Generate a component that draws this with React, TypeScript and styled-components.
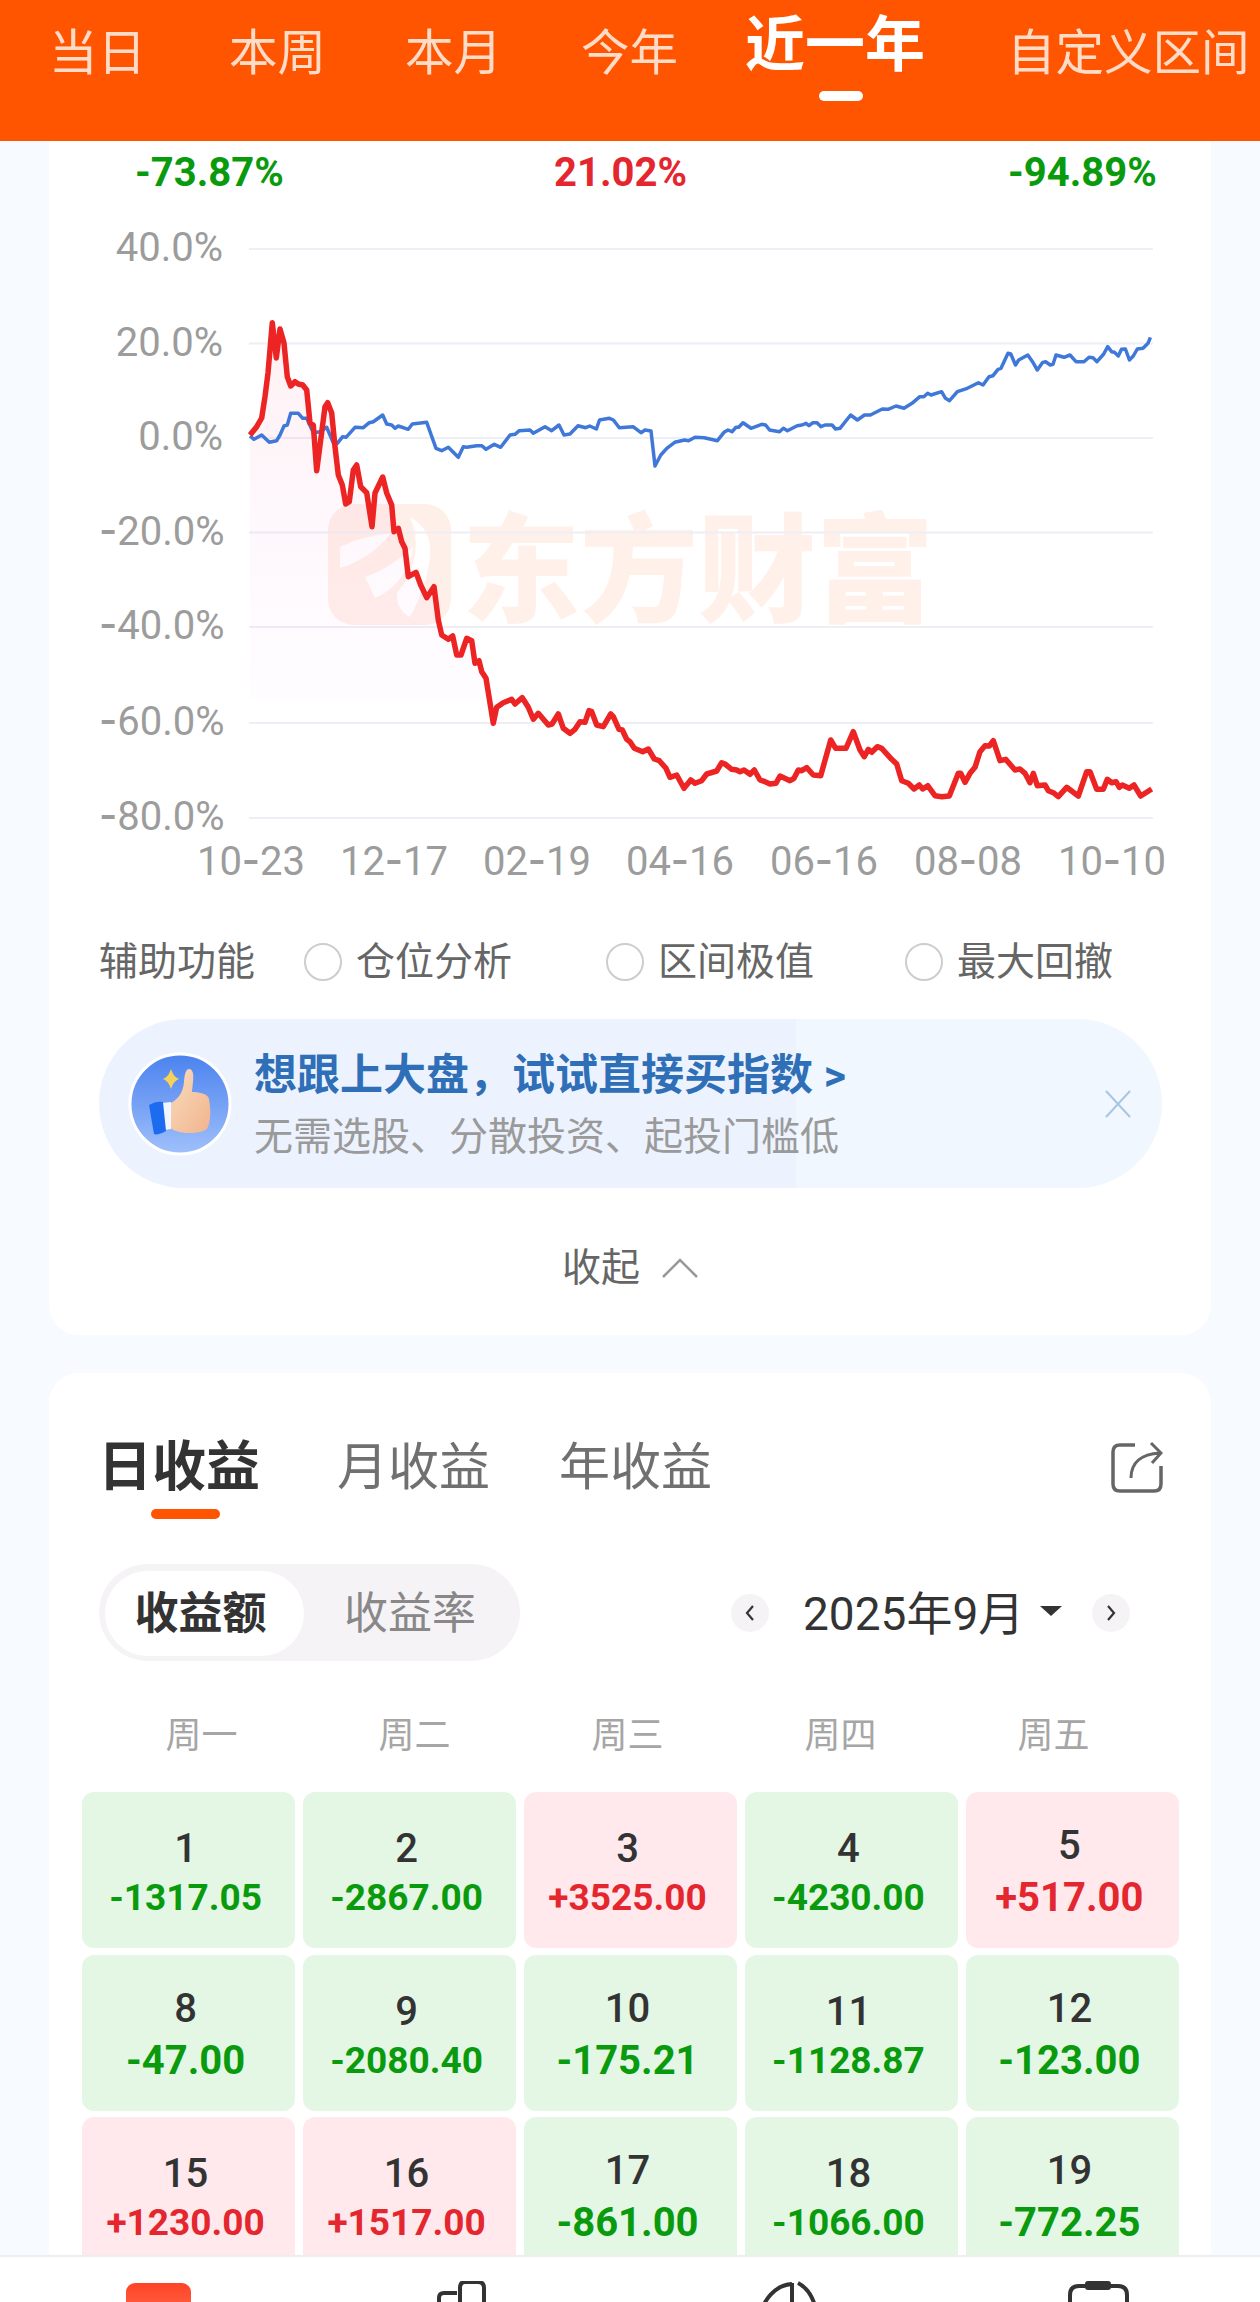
import React from 'react';
import styled, { createGlobalStyle } from 'styled-components';

const FONT = 'Roboto, "Noto Sans CJK SC", sans-serif';
const GREEN = '#0a9a0e';
const RED = '#e4262e';

const GlobalStyle = createGlobalStyle`
  html, body {
    margin: 0;
    padding: 0;
    background: #f7faff;
    overflow: hidden;
  }
  * {
    box-sizing: border-box;
  }
`;

const redLine =
  '250,435 256.7,426.7 261.7,418 265,396.7 268,373 272.3,322.7 276.3,358 280,329 284,343 287.3,376.7 290.7,386 295,381.7 298.3,384 302.7,385 306.7,390 310,423 313.3,425 316.7,470.7 320.7,440 325,406.7 327.7,402.7 331.7,413 335,446.7 338.3,475 342.3,485 345.7,504 349.3,501.7 353.3,470 356.7,465 360.7,486.7 366.7,492.7 372,526.7 375,493 382.7,477 386.7,493 391.7,505 394,531.7 398.3,528.3 401.7,541.7 405,548.3 408.3,576.7 416,572.3 420.7,585 426.7,597.7 434,586.7 438.3,620 441.7,635 448.3,639.3 452.7,636 456.7,655 461,655 466.7,638.3 471.7,640.7 475,663.3 479,660.7 481.7,671.7 486,678.3 493.3,723.3 496.7,707.3 503.3,702.7 511.7,699.3 515,704 522.3,697.7 528.3,707.3 533.3,719.3 538.3,713.3 548.3,725 552,724 558.3,714 563.3,728.3 570,733.3 575,729.3 580,721.7 585,722.3 589,710.7 591.7,711.7 596.7,725 603.3,726.7 610.7,714 613.3,716.7 619,729.3 622.3,730 626.7,739.3 630,741.7 634.3,748.3 642.7,751.7 648.3,749 654.3,759 659.3,760.7 666,768.3 670,777.3 676.7,775 684,788.3 690.7,780 695,783.3 701.7,780.7 706.7,774 716.7,771 721.7,762.7 725,764 731.7,769.3 736.7,770 740,771.7 744,770 750,774.3 754.3,770 760,780 765,781.7 770,784 776,783.3 780,776 790,780.7 794,778.3 798.3,770 801.7,770.7 806.7,767.7 813.3,775 820.7,775.7 830.7,740 835.7,748.3 846,748.3 853.3,731.7 860,750 864.3,756.7 868.3,749.3 871.7,752.3 877.3,746.7 881.7,748.3 891.7,759.3 896.7,764 901.7,780.7 908.3,783.3 914,789 919.3,785 922.7,789 927.7,785.7 935,795.7 941.7,796.7 949.3,796 958.3,773.3 960.7,773.3 965,782.3 970,773.3 975,767.3 980,751.7 985,745.7 989.3,746 993.3,740.7 1000,760.7 1005.7,759.3 1015,770 1020,769 1025,773.3 1030,782.7 1033.3,773.3 1037.3,785.7 1045,785 1048.3,790.7 1053.3,792.7 1058.3,796.7 1066.7,787.3 1078.3,796 1086.7,771.7 1090,771.7 1096.7,789.3 1103.3,789.3 1107.3,779.3 1111.7,782.7 1116,781.7 1119.3,787.3 1122.3,785 1129.3,788.3 1134,785 1140.7,796 1151.7,789';

const blueLine =
  '250,436 254,439.3 261.7,435 269.3,442.3 276.7,440.7 280,435 284,426 287.3,425 290.7,413.3 298.3,413.3 302.7,418.3 306.7,418.3 313.3,432.7 320,431.7 326.7,427.3 333.3,442.7 337.3,443.3 342.7,436.7 346,437.3 355,427.3 363.3,427.7 369.3,422.7 373.3,421.7 382.7,415 386.7,424 391.7,425 395,428.3 398.3,426 408.3,429.3 412.3,424 426.7,422.3 436,448.3 441.7,450.7 448.3,447.3 458.3,457.3 463.3,446.7 466.7,447.3 476.7,445.7 481.7,445.7 486,449.3 494.3,444.3 500.7,447.3 510,435 515,434.3 519.3,430.7 530,430 533.3,433.3 545,426.7 551.7,430.7 559,425 564,435 570,434 578,425.7 585.7,427.7 589.7,426 596.4,429 599.5,420 609.4,418.3 613.4,420 619.3,427.7 633,426.7 641,432.7 645,430 651,431 655,466 660.8,455 666.8,448.3 674.7,442.3 684.6,440 688.5,440.7 695,437.3 704.3,437.7 717.4,440.7 724,432.3 728,430 732,431.7 736,427.3 738.7,427.3 743,422.7 751,428.3 761.7,424.3 765.6,425 769.6,430 779.5,431.7 783.4,428.3 787.4,430.7 797.2,425.7 802,425 806,423.3 809,425.7 813,422.7 817,422.7 821,426.7 825,425 832,425 835.6,429 840,428.3 850.6,415 857.4,420 864.5,415 870.4,415 882.3,409 888,409.3 896,406 904,408.3 912,403.3 919.8,396.7 923.8,396.7 927.7,393.3 931,395 941.6,391.7 945.5,398.3 949.5,400.7 957.4,391.7 967.3,388.3 978.4,382.7 983,385 989,376.7 993,375.7 998,369.3 1001,368.3 1008,353.3 1010.8,354 1015.5,365 1018.7,360 1027.8,355 1032.5,361.7 1037.3,370 1042.4,362.7 1045.6,361.7 1050.3,365 1053,364.3 1056,355 1064,357.3 1070,355 1076,361.7 1084,361.7 1089,357.3 1093,357.7 1097,361.7 1103.7,354 1107.7,346.7 1111.6,351.7 1114.4,352.3 1118.3,356 1121.5,349.3 1125.4,349 1129.4,360 1133.3,356 1137.3,349 1143,348.3 1148,343.3 1150.4,337.3';

const areaPoints =
  redLine.slice(0, redLine.indexOf(' 493.3,723.3')) + ' 489,700 250,700';

const gridYs = [249, 343.5, 438, 532.5, 627, 723, 818];
const yLabels = ['40.0%', '20.0%', '0.0%', '-20.0%', '-40.0%', '-60.0%', '-80.0%'];
const xLabels = [
  ['10-23', 251],
  ['12-17', 394],
  ['02-19', 537],
  ['04-16', 680],
  ['06-16', 824],
  ['08-08', 968],
  ['10-10', 1112],
] as const;

const periods = [
  { label: '当日', gap: 0 },
  { label: '本周', gap: 83 },
  { label: '本月', gap: 79 },
  { label: '今年', gap: 79 },
  { label: '近一年', gap: 67, active: true },
  { label: '自定义区间', gap: 82 },
];

const days = [
  ['1', '-1317.05'], ['2', '-2867.00'], ['3', '+3525.00'], ['4', '-4230.00'], ['5', '+517.00'],
  ['8', '-47.00'], ['9', '-2080.40'], ['10', '-175.21'], ['11', '-1128.87'], ['12', '-123.00'],
  ['15', '+1230.00'], ['16', '+1517.00'], ['17', '-861.00'], ['18', '-1066.00'], ['19', '-772.25'],
];

const Page = styled.div`
  width: 1260px;
  height: 2302px;
  display: flex;
  flex-direction: column;
  overflow: hidden;
  background: #f7faff;
  font-family: ${FONT};
`;

const Header = styled.header`
  flex: 0 0 141px;
  background: #ff5500;
  display: flex;
  align-items: flex-start;
  padding: 17px 0 0 49px;
  white-space: nowrap;
`;

const Period = styled.div<{ $gap: number; $active?: boolean }>`
  margin-left: ${(p) => p.$gap}px;
  display: flex;
  flex-direction: column;
  align-items: center;
  padding-top: ${(p) => (p.$active ? 0 : 14)}px;
  color: ${(p) => (p.$active ? '#fff' : '#ffdcc8')};
  font-size: ${(p) => (p.$active ? 60 : 48.5)}px;
  font-weight: ${(p) => (p.$active ? 700 : 400)};
  line-height: ${(p) => (p.$active ? 58 : 46)}px;
`;

const PeriodMark = styled.i`
  width: 44px;
  height: 10px;
  margin: 16px 0 0 12px;
  border-radius: 5px;
  background: #fff;
`;

const Scroll = styled.main`
  flex: 1;
  min-height: 0;
  overflow: hidden;
`;

const Card = styled.section<{ $flat?: boolean }>`
  width: 1162px;
  margin: ${(p) => (p.$flat ? 0 : 38)}px auto 0 49px;
  background: #fff;
  border-radius: ${(p) => (p.$flat ? '0 0 30px 30px' : '30px 30px 0 0')};
`;

const Returns = styled.div`
  height: 59px;
  padding: 4px 0 0 86px;
  display: grid;
  grid-template-columns: 419px 454px auto;
  align-items: center;
`;

const ReturnValue = styled.span<{ $up?: boolean }>`
  color: ${(p) => (p.$up ? RED : GREEN)};
  font-size: 40px;
  font-weight: 700;
  line-height: 44px;
`;

const ChartSvg = styled.svg`
  display: block;
  width: 1162px;
  height: 700px;
`;

const AxisText = styled.text`
  fill: #9c9c9c;
  font-family: ${FONT};
  font-size: 40px;
`;

const AxisDash = styled.tspan`
  font-size: 54px;
`;

const Watermark = styled.text`
  fill: #fff0ea;
  font-family: ${FONT};
  font-size: 118px;
  font-weight: 900;
`;

const Assist = styled.div`
  margin-top: 42px;
  height: 40px;
  padding-left: 50px;
  display: grid;
  grid-template-columns: 205px 302px 299px auto;
  align-items: center;
  color: #666;
  font-size: 39px;
  line-height: 40px;
`;

const Option = styled.label`
  display: flex;
  align-items: center;
  gap: 14px;
  color: #666;
`;

const Radio = styled.span`
  width: 38px;
  height: 38px;
  border-radius: 50%;
  border: 2.5px solid #cdcdcd;
  background: #fff;
`;

const Banner = styled.div`
  margin: 37px 49px 0 50px;
  height: 169px;
  border-radius: 85px;
  padding: 0 30px 0 29px;
  display: flex;
  align-items: center;
  gap: 22px;
  background: linear-gradient(90deg, #edf3fe 0, #edf3fe 65.6%, #f0f7fe 65.6%, #f0f7fe 100%);
`;

const BannerText = styled.div`
  flex: 1;
  display: flex;
  flex-direction: column;
  padding-top: 2px;
  white-space: nowrap;
`;

const BannerTitle = styled.div`
  color: #2f6fb8;
  font-size: 43px;
  font-weight: 700;
  line-height: 56px;
`;

const BannerSub = styled.div`
  color: #9a9a9a;
  font-size: 39px;
  line-height: 50px;
  margin-top: 9px;
`;

const Collapse = styled.div`
  margin-top: 55px;
  padding-bottom: 42px;
  height: 92px;
  display: flex;
  justify-content: center;
  align-items: center;
  gap: 22px;
  color: #666;
  font-size: 39px;
  line-height: 50px;
`;

const TabRow = styled.div`
  padding: 65px 48px 0 49px;
  display: flex;
  align-items: flex-start;
`;

const Tab = styled.div<{ $gap?: number; $active?: boolean }>`
  margin-left: ${(p) => p.$gap ?? 0}px;
  display: flex;
  flex-direction: column;
  align-items: center;
  color: ${(p) => (p.$active ? '#333' : '#707070')};
  font-size: ${(p) => (p.$active ? 54 : 51)}px;
  font-weight: ${(p) => (p.$active ? 700 : 400)};
  line-height: 60px;
`;

const TabMark = styled.i`
  width: 69px;
  height: 10px;
  margin: 11px 0 0 12px;
  border-radius: 5px;
  background: #ff5500;
`;

const ShareButton = styled.svg`
  margin: 3px 0 0 auto;
  width: 52px;
  height: 52px;
`;

const Controls = styled.div`
  margin-top: 45px;
  padding-left: 50px;
  display: flex;
  align-items: center;
`;

const Toggle = styled.div`
  width: 421px;
  height: 97px;
  padding: 7px 4px 5px 6px;
  border-radius: 49px;
  background: #f6f3f7;
  display: flex;
  font-size: 44px;
  line-height: 87px;
`;

const ToggleOn = styled.div`
  width: 199px;
  padding-right: 8px;
  border-radius: 43px;
  background: #fff;
  color: #333;
  font-weight: 700;
  text-align: center;
`;

const ToggleOff = styled.div`
  flex: 1;
  color: #888;
  text-align: center;
`;

const MonthPicker = styled.div`
  margin-left: 211px;
  display: flex;
  align-items: center;
  color: #333;
  font-size: 46px;
  line-height: 50px;
`;

const StepButton = styled.span`
  width: 38px;
  height: 38px;
  border-radius: 50%;
  background: #f6f3f7;
  display: flex;
  align-items: center;
  justify-content: center;
`;

const MonthLabel = styled.span`
  margin: 3px 16px 0 34px;
`;

const Caret = styled.i`
  width: 0;
  height: 0;
  margin: 0 30px 4px 0;
  border-left: 11px solid transparent;
  border-right: 11px solid transparent;
  border-top: 10px solid #333;
`;

const Weekdays = styled.div`
  margin-top: 55px;
  padding-left: 46px;
  display: grid;
  grid-template-columns: repeat(5, 213px);
  color: #a6a6a6;
  font-size: 36px;
  line-height: 40px;
  text-align: center;
`;

const Calendar = styled.div`
  margin: 36px 32px 0 33px;
  display: grid;
  grid-template-columns: repeat(5, 1fr);
  grid-auto-rows: 156px;
  gap: 6.5px 7.75px;
`;

const Day = styled.div<{ $up: boolean }>`
  border-radius: 12px;
  padding: 8px 6px 0 0;
  background: ${(p) => (p.$up ? '#ffe9ed' : '#e4f7e5')};
  display: flex;
  flex-direction: column;
  align-items: center;
  justify-content: center;
`;

const DayNumber = styled.div`
  color: #333;
  font-size: 40px;
  font-weight: 500;
  line-height: 48px;
`;

const DayValue = styled.div<{ $up: boolean; $big: boolean }>`
  color: ${(p) => (p.$up ? RED : GREEN)};
  font-size: ${(p) => (p.$big ? 40 : 37)}px;
  font-weight: 700;
  line-height: ${(p) => (p.$big ? 56 : 50)}px;
`;

const Nav = styled.nav`
  flex: 0 0 47px;
  overflow: hidden;
  background: #fff;
  border-top: 2px solid #eeeeee;
  display: grid;
  grid-template-columns: repeat(4, 1fr);
  padding-top: 24px;
`;

const NavIcon = styled.svg`
  display: block;
  width: 80px;
  height: 40px;
  margin: 0 auto;
`;

function ThumbBadge() {
  return (
    <svg width="104" height="104" viewBox="0 0 104 104" style={{ flex: 'none' }}>
      <defs>
        <linearGradient id="badgeBg" x1="0" y1="0" x2="0" y2="1">
          <stop offset="0" stopColor="#4a82ee" />
          <stop offset="1" stopColor="#a0c0fb" />
        </linearGradient>
        <linearGradient id="hand" x1="0" y1="0" x2="1" y2="1">
          <stop offset="0" stopColor="#fbdcbd" />
          <stop offset="1" stopColor="#f0b48e" />
        </linearGradient>
      </defs>
      <circle cx="52" cy="52" r="50" fill="url(#badgeBg)" stroke="#fff" strokeWidth="3" />
      <path d="M43 17 C45 23 47 25 51 27 C47 29 45 31 43 37 C41 31 39 29 35 27 C39 25 41 23 43 17Z" fill="#f7d25a" />
      <path
        d="M43 51 C50 47 55 41 56 30 C56.5 22 58 17 61 17 C65 17 66 23 65 30 C64.500 35 64 38 64 40 C72 40 80 42 81 47 C83 58 83 70 79 77 C74 81 60 82 52 80 C48 79 45 78 42 76Z"
        fill="url(#hand)"
      />
      <path d="M34 51 L43 50 L43 77 L36 78Z" fill="#f2f6ff" />
      <path d="M21 53 C26 50 31 49 35 50 L38 79 C33 82 28 83 26 82Z" fill="#1d6cf0" />
    </svg>
  );
}

// the dash on the axis is longer than the font's hyphen
function axisLabel(text: string) {
  const [before, after] = text.split('-');
  if (after === undefined) return text;
  return (
    <>
      {before && <tspan>{before}</tspan>}
      <AxisDash dx="1.5" dy="3">-</AxisDash>
      <tspan dx="1.5" dy="-3">{after}</tspan>
    </>
  );
}

function ReturnChart() {
  return (
    <ChartSvg viewBox="49 200 1162 700">
      <defs>
        <linearGradient id="areaFill" x1="0" y1="0" x2="0" y2="1">
          <stop offset="0" stopColor="#ff3050" stopOpacity="0.07" />
          <stop offset="1" stopColor="#e060ff" stopOpacity="0.015" />
        </linearGradient>
      </defs>

      {/* watermark */}
      <rect x="328" y="504" width="123" height="121" rx="26" fill="#ffefe9" />
      <path d="M340 547 C358 538 375 535 391 533 C378 550 360 562 340 568Z" fill="#fff" />
      <path d="M365 577 C382 572 398 560 413 547 C410 570 395 590 375 598Z" fill="#fff" />
      <path d="M410 517 C425 525 431 538 430 553 C430 572 420 600 410 617 C400 612 396 602 397 593 C410 578 424 550 410 517Z" fill="#fff" />
      <Watermark x="462" y="613">东方财富</Watermark>

      {gridYs.map((y) => (
        <line key={y} x1="249" x2="1153" y1={y} y2={y} stroke="#eeeef5" strokeWidth="2" />
      ))}
      {yLabels.map((t, i) => (
        <AxisText key={t} x="223" y={gridYs[i] + 12} textAnchor="end">
          {axisLabel(t)}
        </AxisText>
      ))}
      {xLabels.map(([t, x]) => (
        <AxisText key={t} x={x} y="875" textAnchor="middle">
          {axisLabel(t)}
        </AxisText>
      ))}

      <polygon points={areaPoints} fill="url(#areaFill)" />
      <polyline points={blueLine} fill="none" stroke="#3f78d8" strokeWidth="3.500" strokeLinejoin="round" />
      <polyline points={redLine} fill="none" stroke="#ec2424" strokeWidth="5.500" strokeLinejoin="round" />
    </ChartSvg>
  );
}

export default function App() {
  return (
    <Page>
      <GlobalStyle />
      <Header>
        {periods.map((p) => (
          <Period key={p.label} $gap={p.gap} $active={p.active}>
            {p.label}
            {p.active && <PeriodMark />}
          </Period>
        ))}
      </Header>

      <Scroll>
        <Card $flat>
          <Returns>
            <ReturnValue>-73.87%</ReturnValue>
            <ReturnValue $up>21.02%</ReturnValue>
            <ReturnValue>-94.89%</ReturnValue>
          </Returns>
          <ReturnChart />
          <Assist>
            <span>辅助功能</span>
            {['仓位分析', '区间极值', '最大回撤'].map((t) => (
              <Option key={t}>
                <Radio />
                {t}
              </Option>
            ))}
          </Assist>
          <Banner>
            <ThumbBadge />
            <BannerText>
              <BannerTitle>想跟上大盘，试试直接买指数 &gt;</BannerTitle>
              <BannerSub>无需选股、分散投资、起投门槛低</BannerSub>
            </BannerText>
            <svg width="28" height="28" viewBox="0 0 28 28">
              <path d="M2 1 L26 27 M26 1 L2 27" stroke="#a9c5e6" strokeWidth="2" fill="none" />
            </svg>
          </Banner>
          <Collapse>
            收起
            <svg width="36" height="20" viewBox="0 0 36 20">
              <path d="M1 19 L18 2 L35 19" stroke="#999" strokeWidth="2.500" fill="none" />
            </svg>
          </Collapse>
        </Card>

        <Card>
          <TabRow>
            <Tab $active>
              日收益
              <TabMark />
            </Tab>
            <Tab $gap={77}>月收益</Tab>
            <Tab $gap={69}>年收益</Tab>
            <ShareButton viewBox="0 0 52 52">
              <path
                d="M24 4 H9 C4.500 4 2 6.500 2 11 V43 C2 47.500 4.500 50 9 50 H43 C47.500 50 50 47.500 50 43 V25"
                fill="none"
                stroke="#666"
                strokeWidth="3.500"
              />
              <path d="M20 37 C20 22 30 13 49 12 M40 2 L50 12 L41 22" fill="none" stroke="#666" strokeWidth="3" />
            </ShareButton>
          </TabRow>

          <Controls>
            <Toggle>
              <ToggleOn>收益额</ToggleOn>
              <ToggleOff>收益率</ToggleOff>
            </Toggle>
            <MonthPicker>
              <StepButton>
                <svg width="10" height="16" viewBox="0 0 10 16">
                  <path d="M8 1 L2 8 L8 15" fill="none" stroke="#333" strokeWidth="2.200" />
                </svg>
              </StepButton>
              <MonthLabel>2025年9月</MonthLabel>
              <Caret />
              <StepButton>
                <svg width="10" height="16" viewBox="0 0 10 16">
                  <path d="M2 1 L8 8 L2 15" fill="none" stroke="#333" strokeWidth="2.200" />
                </svg>
              </StepButton>
            </MonthPicker>
          </Controls>

          <Weekdays>
            {['周一', '周二', '周三', '周四', '周五'].map((d) => (
              <span key={d}>{d}</span>
            ))}
          </Weekdays>

          <Calendar>
            {days.map(([n, v]) => {
              const up = v.startsWith('+');
              return (
                <Day key={n} $up={up}>
                  <DayNumber>{n}</DayNumber>
                  <DayValue $up={up} $big={v.length <= 7}>
                    {v}
                  </DayValue>
                </Day>
              );
            })}
          </Calendar>
        </Card>
      </Scroll>

      <Nav>
        <NavIcon viewBox="0 0 80 40">
          <defs>
            <linearGradient id="navRed" x1="0" y1="0" x2="0" y2="1">
              <stop offset="0" stopColor="#ff4326" />
              <stop offset="1" stopColor="#ff6a4c" />
            </linearGradient>
          </defs>
          <rect x="8" y="2" width="65" height="38" rx="9" fill="url(#navRed)" />
        </NavIcon>
        <NavIcon viewBox="0 0 80 40">
          <path d="M6 40 V17 C6 13 8 12 11 12 H24 M27 40 V7 C27 3 29 1 32 1 H45 C49 1 51 3 51 7 V40" fill="none" stroke="#333" strokeWidth="4" />
          <path d="M6 40 V17" stroke="#333" strokeWidth="4" />
        </NavIcon>
        <NavIcon viewBox="0 0 80 40">
          <path d="M44 3 C28 4 14 18 11 40" fill="none" stroke="#333" strokeWidth="4" />
          <path d="M44 2 V40" stroke="#333" strokeWidth="4" />
          <path d="M50 2 C62 8 68 22 70 40" fill="none" stroke="#333" strokeWidth="4" />
        </NavIcon>
        <NavIcon viewBox="0 0 80 40">
          <path d="M7 40 V14 C7 8 10 5 16 5 H55 C61 5 64 8 64 14 V40" fill="none" stroke="#333" strokeWidth="4" />
          <rect x="22" y="0" width="26" height="9" rx="3" fill="#333" />
        </NavIcon>
      </Nav>
    </Page>
  );
}
